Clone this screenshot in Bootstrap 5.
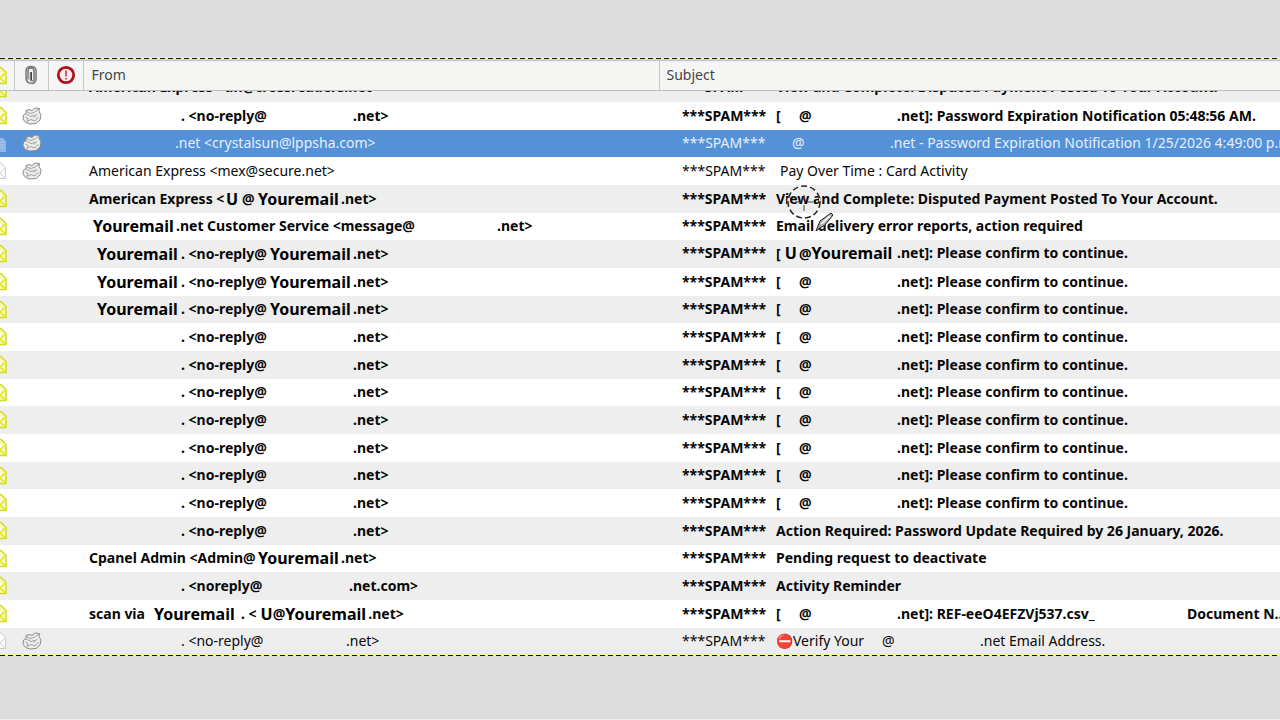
<!DOCTYPE html>
<html lang="en">
<head>
<meta charset="utf-8">
<meta name="viewport" content="width=device-width, initial-scale=1">
<title>Mail list</title>
<link href="https://cdn.jsdelivr.net/npm/bootstrap@5.3.0/dist/css/bootstrap.min.css" rel="stylesheet">
<style>
body{background:#dcdcdc;font-family:"Noto Sans",sans-serif;font-size:14px;line-height:20px;color:#080808}
main{padding-top:57px;border-bottom:1px solid #eee}
.ants{height:2px;background:repeating-linear-gradient(90deg,#111 0 5px,transparent 5px 8px) 0 1px/100% 1px no-repeat #e9f79a}
.ants-wrap{padding-bottom:1px;border-bottom:1px solid #c4c4c4}
.mail-table{table-layout:fixed;line-height:20px;--bs-table-bg:#fff;--bs-table-color:#080808}
.mail-table>:not(caption)>*>*{padding:0;box-shadow:none;vertical-align:middle;white-space:nowrap}
.mail-table thead th{height:29px;background:#f5f5f4;color:#444;font-weight:400;border-bottom:1px solid #bdbdbd;border-right:1px solid #c8c8c8}
.mail-table thead th:last-child{border-right:0}
.mail-table tbody tr{height:28px;font-weight:700}
.mail-table tbody tr:nth-child(3n){height:27px}
.mail-table tbody tr:nth-child(odd)>*{background:#eee}
.mail-table tbody tr.seen{font-weight:400}
.mail-table tbody tr.picked>*{background:#5591d6;color:#e4effb}
.mail-table tbody tr.cut{height:11px}
.cut .d-flex{height:11px;overflow:hidden;align-items:flex-end!important}
.cut span{line-height:30px}
.mail-table tbody tr:last-child{height:26px}
.c-env{width:14px}.c-clip{width:34px}.c-prio{width:35px}.c-from{width:45%}
.mail-table .from{padding-left:6px}
.mail-table .subj{padding-left:23px}
.mail-table th.from{padding-left:8px}
.mail-table th.subj{padding-left:7px}
td .d-flex span{flex:none;white-space:pre}
.env,.ball{display:block}
.env{margin-left:-11px}
.ball{margin-left:8px}
.stamp{font-weight:700;font-size:16px;color:#000}
/* column stops inside the cells */
.name{width:92px}.local{width:172px}.spam{width:94px}.open{width:23px}.at{width:98px}
.local-s{width:168px}.local-r{width:165px}.blank{width:86px}.dom{width:89px}.adm{width:169px}
.you{width:83px}.u{width:16px}.who{width:137px}.sent{width:321px}.via{width:65px}.verify{width:106px}.file{width:290px}
.brush{position:absolute;left:128px;top:0;pointer-events:none;z-index:2}
</style>
</head>
<body>
<svg class="d-none" xmlns="http://www.w3.org/2000/svg">
  <symbol id="env" viewBox="0 0 18 19"><path d="M1.5 7 9 1.500 12 1.500 17 6.500V17.500H1.500z" fill="#fbfbb8" stroke="#d3da22" stroke-width="1.500"/><path d="M4 9 9 4.500 14 9V12L9 15 4 12z" fill="#fff"/><path d="M2 17 7 12 9 14 11 12 16 16.500M11 12 15.500 7.500M2 8 7 12" fill="none" stroke="#e3ea20" stroke-width="1.800"/></symbol>
  <symbol id="envread" viewBox="0 0 18 19"><path d="M1.500 7 9 1.500 12 2 16.500 6.500V17.500H1.500z" fill="#fafafa" stroke="#ccc"/><path d="M2 17 7 12 9 14 11 12 16 17M11 12 16 7" fill="none" stroke="#d5d5d5"/></symbol>
  <symbol id="envsel" viewBox="0 0 18 19"><path d="M1 4H14L17 7V18H1z" fill="#8fb6e4"/><path d="M11 8H16M11 11H16M11 14H16" stroke="#a9c8ec"/></symbol>
  <symbol id="ball" viewBox="0 0 20 18"><path d="M4 3.500 7 2.500 10 3.500 13 1 17.500 1.500 17 4.500 19 8 18 13 14 16.500 8 17 3.500 15.500 1 12 1.500 8 4 6.500z" fill="#ececea" stroke="#8d8d8d"/><path d="M4 4 8 6.500 12 5.500 17 2M4 7 9 9.500 13 8.500M3.500 10 6 11.500 5 14.500 9 12.500 13 14 16.500 10M12 10.500 15 7" fill="none" stroke="#a2a2a2"/></symbol>
</svg>
<main class="min-vh-100">
<section class="overflow-hidden">
<div class="ants-wrap"><div class="ants"></div></div>
<table class="table table-borderless mb-0 mail-table">
<colgroup><col class="c-env"><col class="c-clip"><col class="c-prio"><col class="c-from"><col></colgroup>
<thead><tr>
<th scope="col" aria-label="Status"><svg class="env" width="18" height="19"><use href="#env"/></svg></th>
<th scope="col" aria-label="Attachment"><svg class="d-block mx-auto" width="14" height="20" viewBox="0 0 14 20" fill="none"><path d="M4 14.500V6a3 3 0 0 1 6 0v9a2 2 0 0 1-3.500 0V7M2 13V5.500C2 0 12 0 12 5.500V14c0 2-1 3.500-3 4.500-3 0-7-1-7-5.500z" stroke="#777" stroke-width="1.500"/><path d="M7.500 7v8" stroke="#444"/></svg></th>
<th scope="col" aria-label="Priority"><svg class="d-block mx-auto" width="20" height="20" viewBox="0 0 20 20"><circle cx="10" cy="10" r="7.700" fill="#f6efef" stroke="#b0101e" stroke-width="2.800"/><path d="M10 5.500V11.500M10 13V14.500" stroke="#d0323c" stroke-width="1.600"/></svg></th>
<th scope="col" class="from">From</th><th scope="col" class="subj">Subject</th>
</tr></thead>
<tbody>
<tr class="cut"><td><div class="d-flex"><svg class="env flex-shrink-0 mb-1" width="18" height="19"><use href="#env"/></svg></div></td><td></td><td></td><td class="from"><div class="d-flex"><span>American Express &lt;un@crossreaders.net&gt;</span></div></td><td class="subj"><div class="d-flex"><span class="spam">***SPAM***</span><span>View and Complete: Disputed Payment Posted To Your Account.</span></div></td></tr>

<tr><td><svg class="env" width="18" height="19"><use href="#env"/></svg></td><td><svg class="ball" width="20" height="18"><use href="#ball"/></svg></td><td></td><td class="from"><div class="d-flex"><span class="name"></span><span class="local">. &lt;no-reply@</span><span>.net&gt;</span></div></td><td class="subj"><div class="d-flex"><span class="spam">***SPAM***</span><span class="open">[</span><span class="at">@</span><span>.net]: Password Expiration Notification 05:48:56 AM.</span></div></td></tr>

<tr class="seen picked"><td><svg class="env" width="18" height="19"><use href="#envsel"/></svg></td><td><svg class="ball" width="20" height="18"><use href="#ball"/></svg></td><td></td><td class="from"><div class="d-flex"><span class="blank"></span><span>.net &lt;crystalsun@lppsha.com&gt;</span></div></td><td class="subj"><div class="d-flex"><span class="spam">***SPAM***</span><span class="u"></span><span class="at">@</span><span>.net - Password Expiration Notification 1/25/2026 4:49:00 p.m.</span></div></td></tr>

<tr class="seen"><td><svg class="env" width="18" height="19"><use href="#envread"/></svg></td><td><svg class="ball" width="20" height="18"><use href="#ball"/></svg></td><td></td><td class="from">American Express &lt;mex@secure.net&gt;</td><td class="subj"><div class="d-flex"><span class="spam">***SPAM***</span><span class="ps-1">Pay Over Time : Card Activity</span></div></td></tr>

<tr><td><svg class="env" width="18" height="19"><use href="#env"/></svg></td><td></td><td></td><td class="from"><div class="d-flex"><span class="who">American Express &lt;</span><span class="stamp u">U</span><span class="u">@</span><span class="stamp you">Youremail</span><span>.net&gt;</span></div></td><td class="subj position-relative"><div class="d-flex"><span class="spam">***SPAM***</span><span>View and Complete: Disputed Payment Posted To Your Account.</span></div>
<svg class="brush" width="50" height="50" viewBox="0 0 50 50" fill="none"><circle cx="17" cy="17" r="16" stroke="#fff" stroke-width="1.500"/><circle cx="17" cy="17" r="16" stroke="#222" stroke-width="1.500" stroke-dasharray="6 3"/><path d="M17 10v5M17 20v6M8 17h6M20 17h6" stroke="#444"/><path d="M29 46 33 36 44 28 46 30 38 40 33 43z" fill="#aaa" stroke="#222"/><path d="M34 39 43 31" stroke="#eee" stroke-width="2"/></svg></td></tr>

<tr><td><svg class="env" width="18" height="19"><use href="#env"/></svg></td><td></td><td></td><td class="from"><div class="d-flex"><span class="stamp you ms-1">Youremail</span><span class="sent">.net Customer Service &lt;message@</span><span>.net&gt;</span></div></td><td class="subj"><div class="d-flex"><span class="spam">***SPAM***</span><span>Email delivery error reports, action required</span></div></td></tr>

<tr><td><svg class="env" width="18" height="19"><use href="#env"/></svg></td><td></td><td></td><td class="from"><div class="d-flex"><span class="name stamp ps-2">Youremail</span><span class="dom">. &lt;no-reply@</span><span class="stamp you">Youremail</span><span>.net&gt;</span></div></td><td class="subj"><div class="d-flex"><span class="spam">***SPAM***</span><span class="open">[<span class="stamp ms-1">U</span></span><span class="at">@<span class="stamp">Youremail</span></span><span>.net]: Please confirm to continue.</span></div></td></tr>

<tr><td><svg class="env" width="18" height="19"><use href="#env"/></svg></td><td></td><td></td><td class="from"><div class="d-flex"><span class="name stamp ps-2">Youremail</span><span class="dom">. &lt;no-reply@</span><span class="stamp you">Youremail</span><span>.net&gt;</span></div></td><td class="subj"><div class="d-flex"><span class="spam">***SPAM***</span><span class="open">[</span><span class="at">@</span><span>.net]: Please confirm to continue.</span></div></td></tr>

<tr><td><svg class="env" width="18" height="19"><use href="#env"/></svg></td><td></td><td></td><td class="from"><div class="d-flex"><span class="name stamp ps-2">Youremail</span><span class="dom">. &lt;no-reply@</span><span class="stamp you">Youremail</span><span>.net&gt;</span></div></td><td class="subj"><div class="d-flex"><span class="spam">***SPAM***</span><span class="open">[</span><span class="at">@</span><span>.net]: Please confirm to continue.</span></div></td></tr>

<tr><td><svg class="env" width="18" height="19"><use href="#env"/></svg></td><td></td><td></td><td class="from"><div class="d-flex"><span class="name"></span><span class="local">. &lt;no-reply@</span><span>.net&gt;</span></div></td><td class="subj"><div class="d-flex"><span class="spam">***SPAM***</span><span class="open">[</span><span class="at">@</span><span>.net]: Please confirm to continue.</span></div></td></tr>

<tr><td><svg class="env" width="18" height="19"><use href="#env"/></svg></td><td></td><td></td><td class="from"><div class="d-flex"><span class="name"></span><span class="local">. &lt;no-reply@</span><span>.net&gt;</span></div></td><td class="subj"><div class="d-flex"><span class="spam">***SPAM***</span><span class="open">[</span><span class="at">@</span><span>.net]: Please confirm to continue.</span></div></td></tr>

<tr><td><svg class="env" width="18" height="19"><use href="#env"/></svg></td><td></td><td></td><td class="from"><div class="d-flex"><span class="name"></span><span class="local">. &lt;no-reply@</span><span>.net&gt;</span></div></td><td class="subj"><div class="d-flex"><span class="spam">***SPAM***</span><span class="open">[</span><span class="at">@</span><span>.net]: Please confirm to continue.</span></div></td></tr>

<tr><td><svg class="env" width="18" height="19"><use href="#env"/></svg></td><td></td><td></td><td class="from"><div class="d-flex"><span class="name"></span><span class="local">. &lt;no-reply@</span><span>.net&gt;</span></div></td><td class="subj"><div class="d-flex"><span class="spam">***SPAM***</span><span class="open">[</span><span class="at">@</span><span>.net]: Please confirm to continue.</span></div></td></tr>

<tr><td><svg class="env" width="18" height="19"><use href="#env"/></svg></td><td></td><td></td><td class="from"><div class="d-flex"><span class="name"></span><span class="local">. &lt;no-reply@</span><span>.net&gt;</span></div></td><td class="subj"><div class="d-flex"><span class="spam">***SPAM***</span><span class="open">[</span><span class="at">@</span><span>.net]: Please confirm to continue.</span></div></td></tr>

<tr><td><svg class="env" width="18" height="19"><use href="#env"/></svg></td><td></td><td></td><td class="from"><div class="d-flex"><span class="name"></span><span class="local">. &lt;no-reply@</span><span>.net&gt;</span></div></td><td class="subj"><div class="d-flex"><span class="spam">***SPAM***</span><span class="open">[</span><span class="at">@</span><span>.net]: Please confirm to continue.</span></div></td></tr>

<tr><td><svg class="env" width="18" height="19"><use href="#env"/></svg></td><td></td><td></td><td class="from"><div class="d-flex"><span class="name"></span><span class="local">. &lt;no-reply@</span><span>.net&gt;</span></div></td><td class="subj"><div class="d-flex"><span class="spam">***SPAM***</span><span class="open">[</span><span class="at">@</span><span>.net]: Please confirm to continue.</span></div></td></tr>

<tr><td><svg class="env" width="18" height="19"><use href="#env"/></svg></td><td></td><td></td><td class="from"><div class="d-flex"><span class="name"></span><span class="local">. &lt;no-reply@</span><span>.net&gt;</span></div></td><td class="subj"><div class="d-flex"><span class="spam">***SPAM***</span><span>Action Required: Password Update Required by 26 January, 2026.</span></div></td></tr>

<tr><td><svg class="env" width="18" height="19"><use href="#env"/></svg></td><td></td><td></td><td class="from"><div class="d-flex"><span class="adm">Cpanel Admin &lt;Admin@</span><span class="stamp you">Youremail</span><span>.net&gt;</span></div></td><td class="subj"><div class="d-flex"><span class="spam">***SPAM***</span><span>Pending request to deactivate</span></div></td></tr>

<tr><td><svg class="env" width="18" height="19"><use href="#env"/></svg></td><td></td><td></td><td class="from"><div class="d-flex"><span class="name"></span><span class="local-s">. &lt;noreply@</span><span>.net.com&gt;</span></div></td><td class="subj"><div class="d-flex"><span class="spam">***SPAM***</span><span>Activity Reminder</span></div></td></tr>

<tr><td><svg class="env" width="18" height="19"><use href="#env"/></svg></td><td></td><td></td><td class="from"><div class="d-flex"><span class="via">scan via</span><span class="stamp you me-1">Youremail</span><span class="me-1">. &lt;</span><span class="stamp">U</span><span>@</span><span class="stamp you">Youremail</span><span>.net&gt;</span></div></td><td class="subj"><div class="d-flex"><span class="spam">***SPAM***</span><span class="open">[</span><span class="at">@</span><span class="file">.net]: REF-eeO4EFZVj537.csv_</span><span>Document N...</span></div></td></tr>

<tr class="seen"><td><svg class="env" width="18" height="19"><use href="#envread"/></svg></td><td><svg class="ball" width="20" height="18"><use href="#ball"/></svg></td><td></td><td class="from"><div class="d-flex"><span class="name"></span><span class="local-r">. &lt;no-reply@</span><span>.net&gt;</span></div></td><td class="subj"><div class="d-flex"><span class="spam">***SPAM***</span><span class="verify">⛔Verify Your</span><span class="at">@</span><span>.net Email Address.</span></div></td></tr>
</tbody>
</table>
<div class="ants"></div>
</section>
</main>
<script src="https://cdn.jsdelivr.net/npm/bootstrap@5.3.0/dist/js/bootstrap.bundle.min.js"></script>
</body>
</html>
